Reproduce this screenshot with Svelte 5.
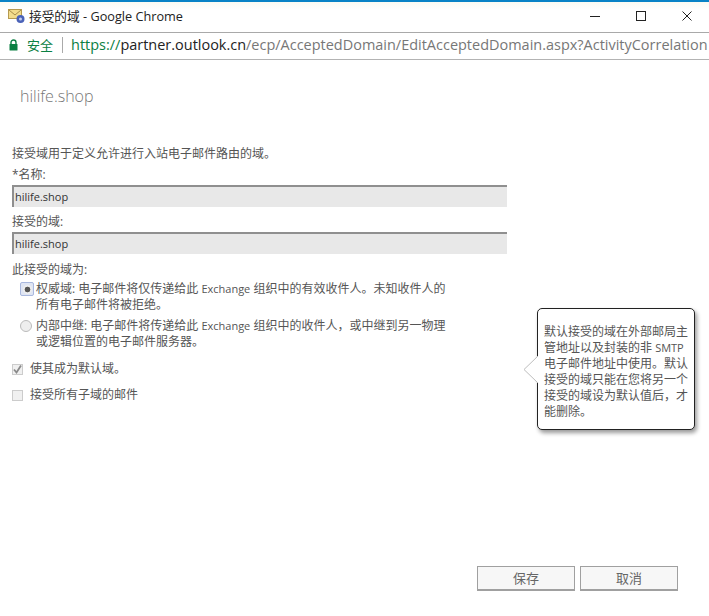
<script>
  const heading = 'hilife.shop';
</script>

<div class="window">
  <header class="titlebar">
    <svg class="favicon" width="18" height="16" viewBox="0 0 18 16">
      <rect x="0.5" y="1.5" width="13" height="9" fill="#f3dc8c" stroke="#b59a50"/>
      <path d="M1 2l6 5 6-5" fill="none" stroke="#a88c48"/>
      <circle cx="12.5" cy="11" r="4" fill="#4a62b8"/>
      <circle cx="12.5" cy="11" r="1.5" fill="#c5cdec"/>
    </svg>
    <span class="title">接受的域 - Google Chrome</span>
    <div class="controls">
      <svg width="12" height="12" viewBox="0 0 12 12"><path d="M1 6.5h10" stroke="#222" fill="none"/></svg>
      <svg width="12" height="12" viewBox="0 0 12 12"><rect x="1.5" y="1.5" width="9" height="9" stroke="#222" fill="none"/></svg>
      <svg width="12" height="12" viewBox="0 0 12 12"><path d="M1.5 1.5l9 9M10.5 1.5l-9 9" stroke="#222" fill="none"/></svg>
    </div>
  </header>
  <div class="addressbar">
    <svg class="lock" width="9" height="12" viewBox="0 0 9 12">
      <path d="M2 5V3.5a2.5 2.5 0 0 1 5 0V5" stroke="#0b8043" stroke-width="1.4" fill="none"/>
      <rect x="0.5" y="5" width="8" height="6.5" rx="0.5" fill="#0b8043"/>
    </svg>
    <span class="secure">安全</span>
    <span class="sep"></span>
    <span class="url"><span class="scheme">https://</span><span class="host">partner.outlook.cn</span><span class="path">/ecp/AcceptedDomain/EditAcceptedDomain.aspx?ActivityCorrelation</span></span>
  </div>

  <main class="page">
    <h1>{heading}</h1>
    <p class="intro">接受域用于定义允许进行入站电子邮件路由的域。</p>
    <label class="field-label" for="name">*名称:</label>
    <div class="input" id="name">hilife.shop</div>
    <label class="field-label second" for="domain">接受的域:</label>
    <div class="input" id="domain">hilife.shop</div>
    <div class="field-label third">此接受的域为:</div>

    <div class="radio-row selected">
      <span class="radio focus"><span class="dot"></span></span>
      <span class="radio-text">权威域: 电子邮件将仅传递给此 <span class="en">Exchange</span> 组织中的有效收件人。未知收件人的<br/>所有电子邮件将被拒绝。</span>
    </div>
    <div class="radio-row next">
      <span class="radio"></span>
      <span class="radio-text">内部中继: 电子邮件将传递给此 <span class="en">Exchange</span> 组织中的收件人，或中继到另一物理<br/>或逻辑位置的电子邮件服务器。</span>
    </div>

    <div class="check-row first">
      <span class="check on">
        <svg width="11" height="11" viewBox="0 0 11 11"><path d="M2 5.5l2.5 3L9 1.5" fill="none" stroke="#8a8a8a" stroke-width="1.8"/></svg>
      </span>
      <span>使其成为默认域。</span>
    </div>
    <div class="check-row">
      <span class="check"></span>
      <span>接受所有子域的邮件</span>
    </div>

    <aside class="bubble">
      <svg class="arrow" width="15" height="29" viewBox="0 0 15 29">
        <path d="M15 1L1 14.5 15 28" fill="#fff" stroke="#bdbdbd"/>
      </svg>
      默认接受的域在外部邮局主管地址以及封装的非 <span class="en">SMTP</span> 电子邮件地址中使用。默认接受的域只能在您将另一个接受的域设为默认值后，才能删除。
    </aside>

    <div class="actions">
      <button>保存</button>
      <button>取消</button>
    </div>
  </main>
</div>

<style>
  :global(body) {
    margin: 0;
    background: #fff;
  }
  .window {
    width: 709px;
    height: 616px;
    overflow: hidden;
    display: flex;
    flex-direction: column;
    font-family: "Open Sans", "Noto Sans CJK SC", sans-serif;
    color: #333;
    box-sizing: border-box;
    border-top: 2px solid #0a83c6;
  }
  .titlebar {
    height: 31px;
    flex: none;
    box-sizing: border-box;
    display: flex;
    align-items: center;
    padding-left: 8px;
    border-bottom: 1px solid #a9a9a9;
    background: linear-gradient(#fbfbf2, #fff 8px);
  }
  .favicon {
    margin-top: -3px;
  }
  .title {
    margin-left: 3px;
    font-size: 12.7px;
    color: #222;
    margin-top: -4px;
  }
  .controls {
    margin-left: auto;
    display: flex;
    gap: 34px;
    padding-right: 16px;
    margin-top: -3px;
  }
  .addressbar {
    height: 27px;
    flex: none;
    box-sizing: border-box;
    display: flex;
    align-items: center;
    padding: 0 0 3px 9px;
    border-bottom: 1px solid #b3b3b3;
    overflow: hidden;
    white-space: nowrap;
  }
  .lock {
    flex: none;
  }
  .secure {
    margin-left: 9px;
    font-size: 13px;
    color: #0b8043;
    flex: none;
  }
  .sep {
    width: 1px;
    height: 16px;
    flex: none;
    background: #aaa;
    margin: 0 8px 0 9px;
  }
  .url {
    font-size: 14.48px;
    flex: none;
  }
  .scheme {
    color: #0b8043;
  }
  .host {
    color: #222;
  }
  .path {
    color: #777;
  }
  .page {
    position: relative;
    flex: 1;
    padding: 25px 0 0 12px;
    font-size: 12px;
    color: #555;
  }
  h1 {
    margin: 0 0 0 8px;
    font-size: 16px;
    line-height: 22px;
    font-weight: 300;
    color: #777;
  }
  .intro {
    margin: 39px 0 0;
    line-height: 16px;
  }
  .field-label {
    display: block;
    line-height: 16px;
    margin-top: 5px;
  }
  .field-label.second {
    margin-top: 7px;
  }
  .field-label.third {
    margin-top: 8px;
  }
  .input {
    width: 495px;
    height: 22px;
    margin-top: 2px;
    box-sizing: border-box;
    background: #e8e8e8;
    border-top: 2px solid #8f8f8f;
    border-left: 2px solid #8f8f8f;
    font-size: 11px;
    line-height: 20px;
    color: #333;
    padding-left: 1px;
  }
  .en {
    font-size: 11px;
  }
  .radio-row {
    display: flex;
    margin: 3px 0 0 8px;
    line-height: 16px;
  }
  .radio-row.next {
    margin-top: 5px;
  }
  .radio {
    width: 12px;
    height: 12px;
    flex: none;
    margin-right: 4px;
    margin-top: 2px;
    border-radius: 50%;
    border: 1px solid #bbb;
    background: #eee;
    display: flex;
    align-items: center;
    justify-content: center;
    box-sizing: border-box;
  }
  .radio.focus {
    width: 14px;
    height: 14px;
    margin: 1px 2px 0 0;
    border-radius: 2px;
    background: #dfe5f3;
    border: 1px solid #a9b8de;
  }
  .dot {
    width: 9px;
    height: 9px;
    border-radius: 50%;
    background: radial-gradient(#555 40%, #eee 50%);
  }
  .check-row {
    display: flex;
    align-items: center;
    gap: 7px;
    margin-top: 10px;
    line-height: 16px;
  }
  .check-row.first {
    margin-top: 11px;
  }
  .check {
    width: 11px;
    height: 11px;
    box-sizing: border-box;
    border: 1px solid #ccc;
    background: #f0f0f0;
    display: flex;
  }
  .check svg {
    margin: -1px;
  }
  .bubble {
    position: absolute;
    left: 537px;
    top: 248px;
    width: 158px;
    height: 122px;
    box-sizing: border-box;
    background: #fff;
    border: 1px solid #222;
    border-radius: 5px;
    box-shadow: 2px 3px 4px rgba(0, 0, 0, 0.4);
    padding: 15px 6px 0;
    font-size: 12px;
    line-height: 16px;
    color: #555;
  }
  .arrow {
    position: absolute;
    left: -15px;
    top: 46px;
  }
  .actions {
    position: absolute;
    left: 477px;
    top: 506px;
    display: flex;
    gap: 5px;
  }
  button {
    width: 98px;
    height: 25px;
    box-sizing: border-box;
    border: 1px solid #a0a0a0;
    border-bottom-width: 2px;
    background: #f7f7f7;
    font: inherit;
    font-size: 13px;
    color: #666;
    padding: 0 0 2px;
  }
</style>
